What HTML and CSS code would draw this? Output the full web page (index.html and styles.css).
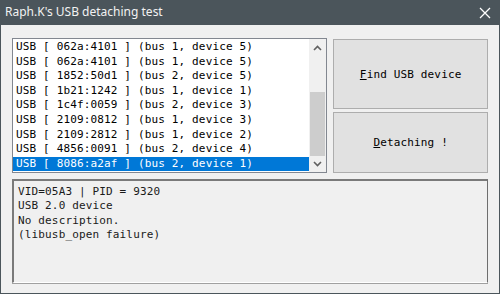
FILE: index.html
```html
<!DOCTYPE html>
<html>
<head>
<meta charset="utf-8">
<link rel="stylesheet" href="styles.css">
</head>
<body>
<div class="window">
  <div class="titlebar">
    <span class="title">Raph.K's USB detaching test</span>
    <svg class="close" width="12" height="12" viewBox="0 0 12 12"><path d="M1 1L11 11M11 1L1 11" stroke="#ffffff" stroke-width="1.3" fill="none"/></svg>
  </div>
  <div class="client">
    <div class="toprow">
      <div class="listbox">
        <div class="items">
          <div class="item">USB [ 062a:4101 ] (bus 1, device 5)</div>
          <div class="item">USB [ 062a:4101 ] (bus 1, device 5)</div>
          <div class="item">USB [ 1852:50d1 ] (bus 2, device 5)</div>
          <div class="item">USB [ 1b21:1242 ] (bus 1, device 1)</div>
          <div class="item">USB [ 1c4f:0059 ] (bus 2, device 3)</div>
          <div class="item">USB [ 2109:0812 ] (bus 1, device 3)</div>
          <div class="item">USB [ 2109:2812 ] (bus 1, device 2)</div>
          <div class="item">USB [ 4856:0091 ] (bus 2, device 4)</div>
          <div class="item selected">USB [ 8086:a2af ] (bus 2, device 1)</div>
        </div>
        <div class="scrollbar">
          <div class="arrow up"><svg width="9" height="6" viewBox="0 0 9 6"><path d="M1 5L4.5 1.5L8 5" stroke="#606060" stroke-width="1.6" fill="none"/></svg></div>
          <div class="track"><div class="thumb"></div></div>
          <div class="arrow down"><svg width="9" height="6" viewBox="0 0 9 6"><path d="M1 1L4.5 4.5L8 1" stroke="#606060" stroke-width="1.6" fill="none"/></svg></div>
        </div>
      </div>
      <div class="buttons">
        <div class="btn btn-find"><span><u>F</u>ind USB device</span></div>
        <div class="btn btn-detach"><span><u>D</u>etaching !</span></div>
      </div>
    </div>
    <div class="infobox">
      <div>VID=05A3 | PID = 9320</div>
      <div>USB 2.0 device</div>
      <div>No description.</div>
      <div>(libusb_open failure)</div>
    </div>
  </div>
</div>
</body>
</html>
```
FILE: styles.css
```css
html, body {
  margin: 0;
  padding: 0;
  background: #f0f0f0;
}
.window {
  width: 500px;
  height: 294px;
  box-sizing: border-box;
  border: 1px solid #4b555b;
  border-top: none;
  background: #f0f0f0;
  display: flex;
  flex-direction: column;
}
.titlebar {
  height: 25px;
  background: #4b555b;
  display: flex;
  align-items: center;
  justify-content: space-between;
  margin: 0 -1px;
  padding: 0 9px 0 5px;
  flex: none;
}
.title {
  font-family: "Noto Sans", "Open Sans", sans-serif;
  font-size: 12px;
  color: #f2f2f2;
  position: relative;
  top: -1px;
}
.close {
  display: block;
}
.client {
  padding: 13px 11px 0 11px;
  display: flex;
  flex-direction: column;
  gap: 6px;
  font-family: "DejaVu Sans Mono", "Liberation Mono", monospace;
  font-size: 11px;
  letter-spacing: 0.15px;
  color: #000;
}
.toprow {
  display: flex;
  gap: 6px;
  height: 135px;
}
.listbox {
  width: 316px;
  box-sizing: border-box;
  border: 1px solid #828790;
  background: #fff;
  display: flex;
}
.items {
  flex: 1;
  padding-top: 1px;
}
.item {
  height: 14.6px;
  line-height: 14.6px;
  padding-left: 3px;
  white-space: nowrap;
}
.item.selected {
  background: #0078d7;
  color: #fff;
}
.scrollbar {
  width: 17px;
  background: #f0f0f0;
  display: flex;
  flex-direction: column;
}
.arrow {
  height: 17px;
  display: flex;
  align-items: center;
  justify-content: center;
  flex: none;
}
.arrow.down {
  height: 16px;
}
.track {
  flex: 1;
  display: flex;
  flex-direction: column;
  justify-content: flex-end;
  padding: 0 1px;
}
.thumb {
  height: 64px;
  background: #cdcdcd;
}
.buttons {
  width: 155px;
  display: flex;
  flex-direction: column;
  gap: 3px;
  padding-top: 1px;
}
.btn {
  box-sizing: border-box;
  border: 1px solid #adadad;
  background: #e1e1e1;
  display: flex;
  align-items: center;
  justify-content: center;
}
.btn-find {
  height: 70px;
}
.btn-detach {
  flex: 1;
}
.infobox {
  width: 476px;
  height: 104px;
  box-sizing: border-box;
  border-top: 2px solid #7a7a7a;
  border-left: 2px solid #7a7a7a;
  border-right: 1px solid #6e6e6e;
  border-bottom: 1px solid #ffffff;
  box-shadow: 0 1px 0 #a0a0a0;
  background: #f0f0f0;
  padding: 4px 4px;
  line-height: 14.3px;
  color: #1a1a1a;
}
```
